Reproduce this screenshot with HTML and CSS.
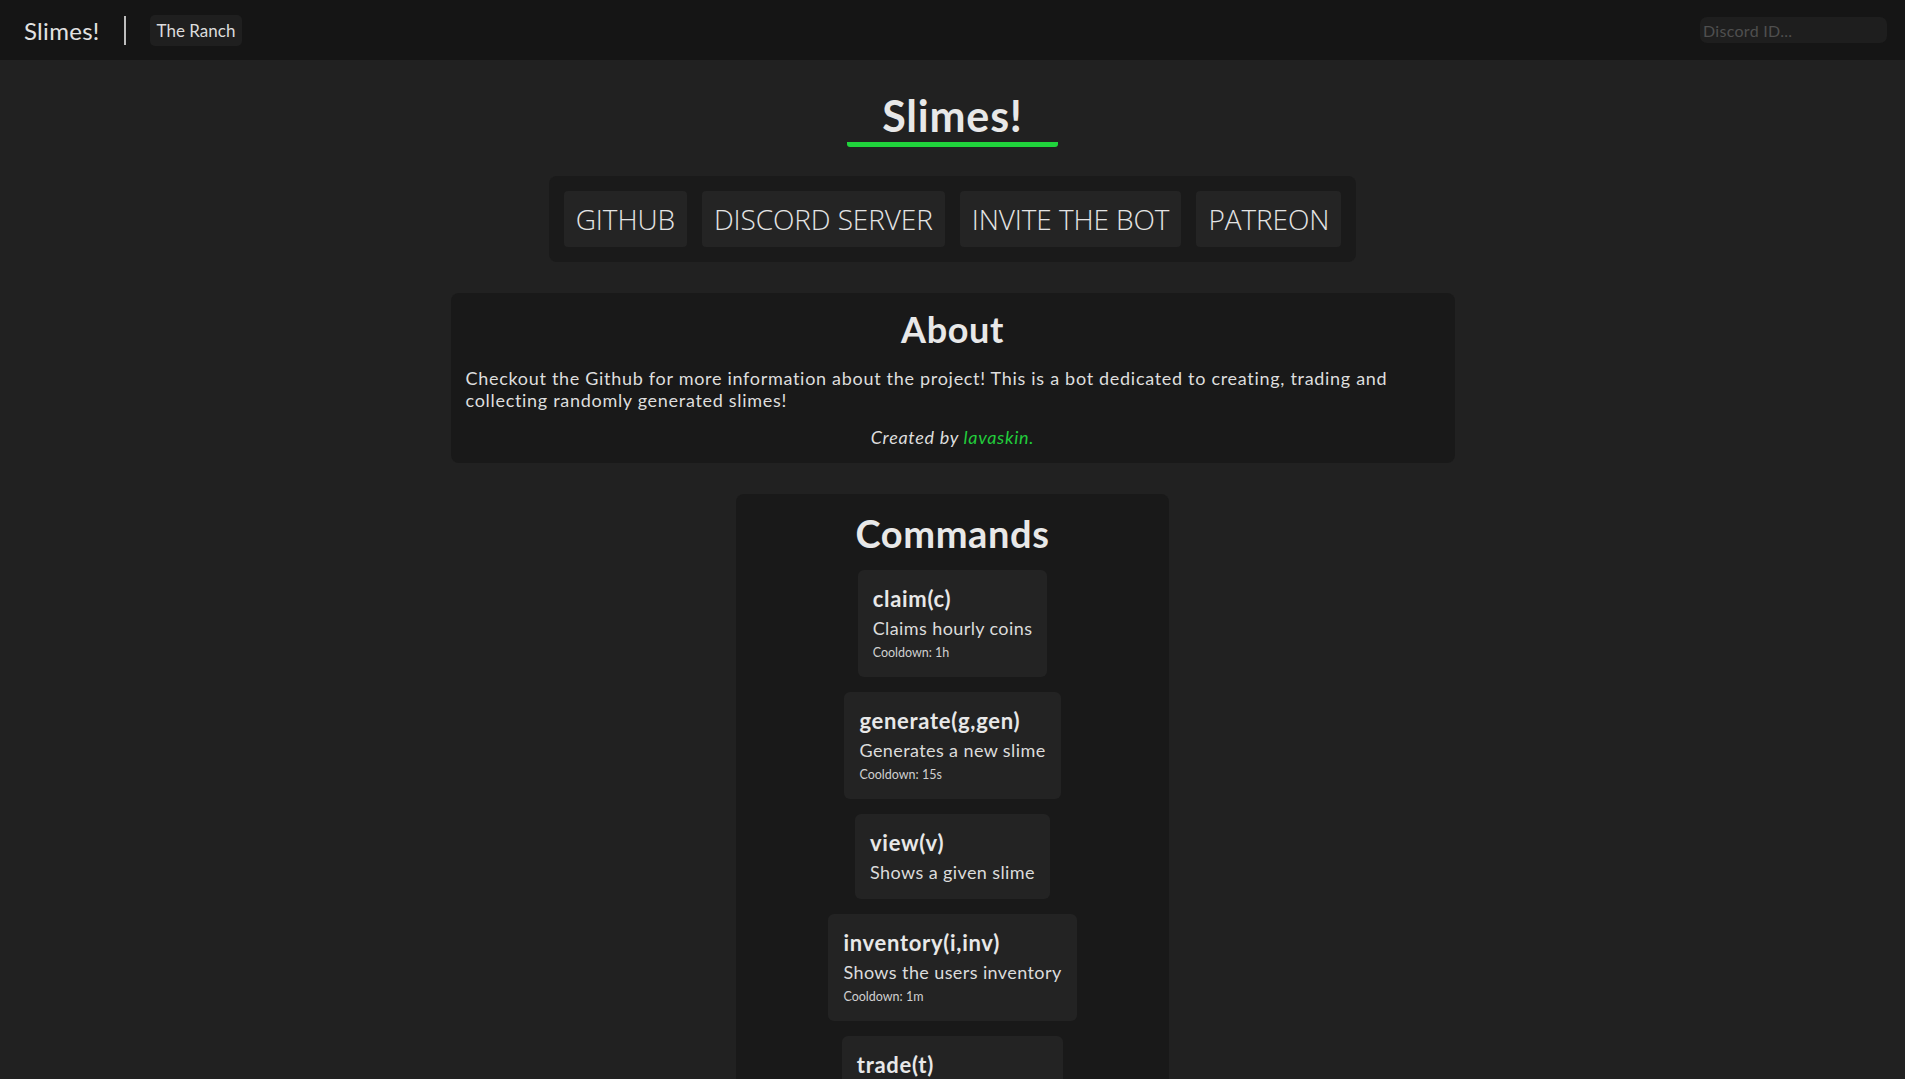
FILE: index.html
```html
<!DOCTYPE html>
<html lang="en">
<head>
<meta charset="utf-8">
<title>Slimes!</title>
<link rel="stylesheet" href="styles.css">
</head>
<body>
<nav class="navbar">
  <div class="nav-left">
    <a class="brand" href="#">Slimes!</a>
    <span class="divider"></span>
    <a class="nav-link" href="#">The Ranch</a>
  </div>
  <input class="search" type="text" placeholder="Discord ID...">
</nav>
<main class="main">
  <h1 class="title">Slimes!</h1>
  <div class="links">
    <a class="link-btn" href="#">GITHUB</a>
    <a class="link-btn" href="#">DISCORD SERVER</a>
    <a class="link-btn" href="#">INVITE THE BOT</a>
    <a class="link-btn" href="#">PATREON</a>
  </div>
  <section class="panel about">
    <h2 class="panel-title">About</h2>
    <p class="about-text">Checkout the Github for more information about the project! This is a bot dedicated to creating, trading and collecting randomly generated slimes!</p>
    <p class="credit">Created by <a class="credit-link" href="#">lavaskin.</a></p>
  </section>
  <section class="panel commands">
    <h2 class="panel-title">Commands</h2>
    <div class="cmd-list">
      <div class="cmd">
        <div class="cmd-name">claim(c)</div>
        <div class="cmd-desc">Claims hourly coins</div>
        <div class="cmd-cd">Cooldown: 1h</div>
      </div>
      <div class="cmd">
        <div class="cmd-name">generate(g,gen)</div>
        <div class="cmd-desc">Generates a new slime</div>
        <div class="cmd-cd">Cooldown: 15s</div>
      </div>
      <div class="cmd">
        <div class="cmd-name">view(v)</div>
        <div class="cmd-desc">Shows a given slime</div>
      </div>
      <div class="cmd">
        <div class="cmd-name">inventory(i,inv)</div>
        <div class="cmd-desc">Shows the users inventory</div>
        <div class="cmd-cd">Cooldown: 1m</div>
      </div>
      <div class="cmd">
        <div class="cmd-name">trade(t)</div>
        <div class="cmd-desc">Trade slimes with users</div>
      </div>
    </div>
  </section>
</main>
</body>
</html>
```
FILE: styles.css
```css
* { box-sizing: border-box; }
html, body {
  margin: 0;
  padding: 0;
  background: #212121;
  color: #e6e6e6;
  font-family: Lato, "Open Sans", sans-serif;
}
a { text-decoration: none; color: inherit; }

.navbar {
  height: 60px;
  background: #151515;
  display: flex;
  align-items: center;
  justify-content: space-between;
  padding: 0 18px 0 24px;
}
.nav-left {
  display: flex;
  align-items: center;
  gap: 24px;
}
.brand {
  font-size: 24px;
  font-weight: 400;
  letter-spacing: 0.3px;
  color: #e2e2e2;
}
.divider {
  width: 2px;
  height: 29px;
  background: #bdbdbd;
}
.nav-link {
  font-size: 17px;
  color: #dcdcdc;
  background: #1f1f1f;
  border-radius: 5px;
  height: 31px;
  line-height: 31px;
  padding: 0 7px;
}
.search {
  width: 187px;
  height: 26px;
  background: #1e1e1e;
  border: none;
  border-radius: 7px;
  padding: 0 3px;
  font-family: Lato, sans-serif;
  font-size: 16px;
  letter-spacing: 0.3px;
  color: #ddd;
  outline: none;
}
.search::placeholder { color: #4f4f4f; }

.main {
  display: flex;
  flex-direction: column;
  align-items: center;
}
.title {
  margin: 30px 0 0;
  font-size: 43px;
  line-height: 1.2;
  font-weight: 700;
  letter-spacing: 0.8px;
  color: #e8e8e8;
  padding: 0 35px;
  border-bottom: 5px solid #20d43c;
  border-radius: 3px;
}
.links {
  margin-top: 29px;
  display: flex;
  gap: 15px;
  padding: 15px;
  background: #1a1a1a;
  border-radius: 8px;
}
.link-btn {
  height: 56px;
  display: flex;
  align-items: center;
  padding: 0 12px;
  background: #242424;
  border-radius: 4px;
  font-family: "Open Sans", sans-serif;
  font-weight: 300;
  font-size: 28px;
  letter-spacing: -0.1px;
  color: #e4e4e4;
}
.panel {
  background: #191919;
  border-radius: 8px;
}
.panel-title {
  margin: 0;
  font-size: 36px;
  line-height: 1.2;
  font-weight: 700;
  letter-spacing: 0.6px;
  color: #e8e8e8;
  text-align: center;
}
.about {
  margin-top: 31px;
  width: 1004px;
  padding: 15px;
}
.about-text {
  margin: 16px 0 0;
  max-width: 960px;
  font-size: 18px;
  line-height: 22px;
  letter-spacing: 0.7px;
  color: #dedede;
}
.credit {
  margin: 15px 0 0;
  font-size: 18px;
  line-height: 22px;
  letter-spacing: 0.7px;
  font-style: italic;
  text-align: center;
  color: #dedede;
}
.credit-link { color: #22cc3c; }

.commands {
  margin-top: 31px;
  width: 433px;
  padding: 17px 15px 20px;
}
.commands .panel-title { font-size: 38px; }
.cmd-list {
  margin-top: 14px;
  display: flex;
  flex-direction: column;
  align-items: center;
  gap: 15px;
}
.cmd {
  background: #232323;
  border-radius: 6px;
  padding: 15px 15px 14px;
}
.cmd-name {
  font-size: 22px;
  line-height: 28px;
  font-weight: 700;
  letter-spacing: 0.7px;
  color: #e8e8e8;
}
.cmd-desc {
  margin-top: 2px;
  font-size: 18px;
  line-height: 26px;
  letter-spacing: 0.4px;
  color: #dcdcdc;
}
.cmd-cd {
  margin-top: 2px;
  font-size: 12.5px;
  line-height: 20px;
  color: #d0d0d0;
}
```
